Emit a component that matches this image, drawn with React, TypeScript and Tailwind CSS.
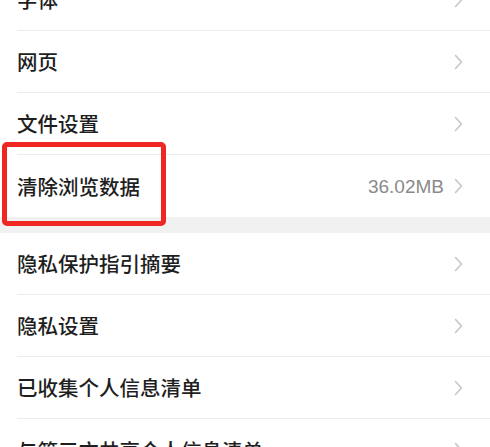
import React from "react";

const font = {
  fontFamily: '"Noto Sans CJK SC", "Liberation Sans", sans-serif',
};

function Chevron() {
  return (
    <svg width="9" height="16" viewBox="0 0 9 16" className="shrink-0">
      <path
        d="M1.5 1.5 L7.5 8 L1.5 14.5"
        fill="none"
        stroke="#c6c6c6"
        strokeWidth="1.6"
        strokeLinecap="round"
        strokeLinejoin="round"
      />
    </svg>
  );
}

function Row({
  title,
  value,
  last,
  className = "",
}: {
  title: string;
  value?: string;
  last?: boolean;
  className?: string;
}) {
  return (
    <div className={`pl-[17px] bg-white ${className}`}>
      <div
        className={`h-[62px] flex items-center justify-between pr-[27px] ${
          last ? "" : "border-b border-[#ededed]"
        }`}
      >
        <span className="text-[20.5px] font-medium text-[#1e1e1e] leading-none">
          {title}
        </span>
        <div className="flex items-center gap-[10px]">
          {value && (
            <span
              className="text-[19px] text-[#8a8a8a] leading-none"
              style={{ fontFamily: '"Liberation Sans", sans-serif' }}
            >
              {value}
            </span>
          )}
          <Chevron />
        </div>
      </div>
    </div>
  );
}

export default function App() {
  return (
    <div
      className="w-[490px] h-[447px] overflow-hidden bg-white relative"
      style={font}
    >
      <Row title="字体" className="mt-[-31px]" />
      <Row title="网页" />
      <Row title="文件设置" />
      <Row title="清除浏览数据" value="36.02MB" last />
      <div className="h-[16px] bg-[#f1f1f1]" />
      <Row title="隐私保护指引摘要" />
      <Row title="隐私设置" />
      <Row title="已收集个人信息清单" />
      <Row title="与第三方共享个人信息清单" last />

      <div className="absolute left-[2px] top-[142px] w-[164px] h-[84px] border-[5px] border-[#ef2621] rounded-[5px]" />
    </div>
  );
}
